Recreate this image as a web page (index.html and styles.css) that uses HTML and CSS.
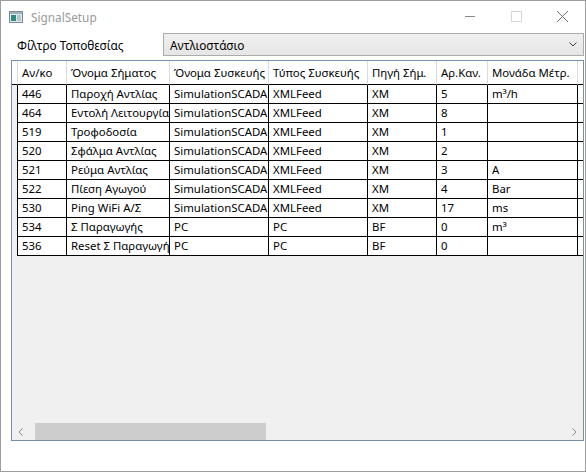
FILE: index.html
```html
<!DOCTYPE html>
<html lang="el">
<head>
<meta charset="utf-8">
<title>SignalSetup</title>
<link rel="stylesheet" href="styles.css">
</head>
<body>
<div class="window">
  <div class="titlebar">
    <svg class="appicon" width="14" height="12" viewBox="0 0 14 12">
      <rect x="0.5" y="0.5" width="13" height="11" fill="#dfe6ea" stroke="#7b8c99"/>
      <rect x="1" y="1" width="12" height="2" fill="#9fb0bb"/>
      <rect x="2" y="4" width="5" height="6" fill="#2f8a86"/>
      <rect x="8" y="4" width="4" height="6" fill="#b9c6ce"/>
    </svg>
    <span class="title">SignalSetup</span>
    <div class="controls">
      <svg class="ctl" width="46" height="30" viewBox="0 0 46 30"><line x1="18" y1="15.5" x2="28" y2="15.5" stroke="#8a8a8a"/></svg>
      <svg class="ctl" width="46" height="30" viewBox="0 0 46 30"><rect x="18.5" y="10.5" width="10" height="10" fill="none" stroke="#d6d6d6"/></svg>
      <svg class="ctl" width="46" height="30" viewBox="0 0 46 30"><path d="M18 10 L29 21 M29 10 L18 21" stroke="#707070" stroke-width="1"/></svg>
    </div>
  </div>

  <div class="filter">
    <span class="filter-label">Φίλτρο Τοποθεσίας</span>
    <div class="combo">
      <span class="combo-text">Αντλιοστάσιο</span>
      <svg class="chev" width="8" height="5" viewBox="0 0 8 5"><path d="M0.5 0.5 L4 4 L7.5 0.5" fill="none" stroke="#404040"/></svg>
    </div>
  </div>

  <div class="datagrid">
    <div class="rows">
      <div class="row head">
        <div class="rh"></div>
        <div class="hc">Αν/κο</div>
        <div class="hc">Όνομα Σήματος</div>
        <div class="hc">Όνομα Συσκευής</div>
        <div class="hc">Τύπος Συσκευής</div>
        <div class="hc">Πηγή Σήμ.</div>
        <div class="hc">Αρ.Καν.</div>
        <div class="hc">Μονάδα Μέτρ.</div>
        <div class="hc last"></div>
      </div>
      <div class="row"><div class="rh"></div><div class="c">446</div><div class="c">Παροχή Αντλίας</div><div class="c">SimulationSCADA</div><div class="c">XMLFeed</div><div class="c">XM</div><div class="c">5</div><div class="c">m³/h</div><div class="c last"></div></div>
      <div class="row"><div class="rh"></div><div class="c">464</div><div class="c">Εντολή Λειτουργίας</div><div class="c">SimulationSCADA</div><div class="c">XMLFeed</div><div class="c">XM</div><div class="c">8</div><div class="c"></div><div class="c last"></div></div>
      <div class="row"><div class="rh"></div><div class="c">519</div><div class="c">Τροφοδοσία</div><div class="c">SimulationSCADA</div><div class="c">XMLFeed</div><div class="c">XM</div><div class="c">1</div><div class="c"></div><div class="c last"></div></div>
      <div class="row"><div class="rh"></div><div class="c">520</div><div class="c">Σφάλμα Αντλίας</div><div class="c">SimulationSCADA</div><div class="c">XMLFeed</div><div class="c">XM</div><div class="c">2</div><div class="c"></div><div class="c last"></div></div>
      <div class="row"><div class="rh"></div><div class="c">521</div><div class="c">Ρεύμα Αντλίας</div><div class="c">SimulationSCADA</div><div class="c">XMLFeed</div><div class="c">XM</div><div class="c">3</div><div class="c">A</div><div class="c last"></div></div>
      <div class="row"><div class="rh"></div><div class="c">522</div><div class="c">Πίεση Αγωγού</div><div class="c">SimulationSCADA</div><div class="c">XMLFeed</div><div class="c">XM</div><div class="c">4</div><div class="c">Bar</div><div class="c last"></div></div>
      <div class="row"><div class="rh"></div><div class="c">530</div><div class="c">Ping WiFi A/Σ</div><div class="c">SimulationSCADA</div><div class="c">XMLFeed</div><div class="c">XM</div><div class="c">17</div><div class="c">ms</div><div class="c last"></div></div>
      <div class="row"><div class="rh"></div><div class="c">534</div><div class="c">Σ Παραγωγής</div><div class="c">PC</div><div class="c">PC</div><div class="c">BF</div><div class="c">0</div><div class="c">m³</div><div class="c last"></div></div>
      <div class="row"><div class="rh"></div><div class="c">536</div><div class="c">Reset Σ Παραγωγής</div><div class="c">PC</div><div class="c">PC</div><div class="c">BF</div><div class="c">0</div><div class="c"></div><div class="c last"></div></div>
    </div>
    <div class="filler"></div>
    <div class="hscroll">
      <svg class="arrow" width="17" height="17" viewBox="0 0 17 17"><path d="M10.5 5.5 L7 9 L10.5 12.5" fill="none" stroke="#8a8a8a"/></svg>
      <div class="track"><div class="thumb"></div></div>
      <svg class="arrow" width="17" height="17" viewBox="0 0 17 17"><path d="M6.5 5.5 L10 9 L6.5 12.5" fill="none" stroke="#8a8a8a"/></svg>
    </div>
  </div>
</div>
</body>
</html>
```

FILE: styles.css
```css
html, body {
  margin: 0;
  padding: 0;
  background: #ffffff;
}
body {
  font-family: "Noto Sans", "Open Sans", "DejaVu Sans", sans-serif;
  font-size: 11.4px;
  color: #000;
}
.window {
  box-sizing: border-box;
  width: 586px;
  height: 472px;
  border: 1px solid #9d9d9d;
  background: #ffffff;
  display: flex;
  flex-direction: column;
}
.titlebar {
  height: 31px;
  display: flex;
  align-items: center;
  flex-shrink: 0;
}
.appicon {
  margin-left: 8px;
}
.title {
  margin-left: 8px;
  color: #9a9a9a;
  font-size: 11.8px;
}
.controls {
  margin-left: auto;
  display: flex;
  align-self: flex-start;
}
.ctl {
  display: block;
}
.filter {
  height: 23px;
  display: flex;
  align-items: stretch;
  margin-top: 1px;
  padding-left: 16px;
  padding-right: 1px;
  flex-shrink: 0;
}
.filter-label {
  width: 146px;
  display: flex;
  align-items: center;
  font-size: 11.8px;
}
.combo {
  flex: 1;
  box-sizing: border-box;
  border: 1px solid #acacac;
  background: linear-gradient(#f0f0f0, #e5e5e5);
  display: flex;
  align-items: center;
  padding-left: 6px;
  padding-right: 6px;
  font-size: 11.8px;
}
.combo-text {
  flex: 1;
}
.chev {
  display: block;
}
.datagrid {
  box-sizing: border-box;
  margin-top: 4px;
  margin-left: 10px;
  width: 573px;
  height: 381px;
  border: 1px solid #7590ab;
  background: #f0f0f0;
  display: flex;
  flex-direction: column;
  overflow: hidden;
}
.rows {
  display: flex;
  flex-direction: column;
}
.row {
  display: grid;
  grid-template-columns: 6px 49px 103px 99px 99px 69px 51px 90px 1fr;
  height: 19px;
}
.row.head {
  height: 24px;
  background: #ffffff;
}
.rh {
  box-sizing: border-box;
  border-right: 1px solid #000;
  background: #f0f0f0;
}
.head .rh {
  border-right: 1px solid #dcdcdc;
  background: #ffffff;
  border-bottom: 1px solid #000;
}
.hc {
  box-sizing: border-box;
  border-right: 1px solid #dcdcdc;
  border-bottom: 1px solid #000;
  padding-left: 4px;
  line-height: 23px;
  white-space: nowrap;
  overflow: hidden;
}
.c {
  box-sizing: border-box;
  border-right: 1px solid #000;
  border-bottom: 1px solid #000;
  background: #ffffff;
  padding-left: 4px;
  line-height: 18px;
  white-space: nowrap;
  overflow: hidden;
}
.c.last, .hc.last {
  border-right: none;
}
.filler {
  flex: 1;
}
.hscroll {
  height: 17px;
  display: flex;
  flex-shrink: 0;
}
.arrow {
  display: block;
  flex-shrink: 0;
}
.track {
  flex: 1;
  display: flex;
}
.thumb {
  margin-left: 6px;
  width: 231px;
  background: #cdcdcd;
}
```
